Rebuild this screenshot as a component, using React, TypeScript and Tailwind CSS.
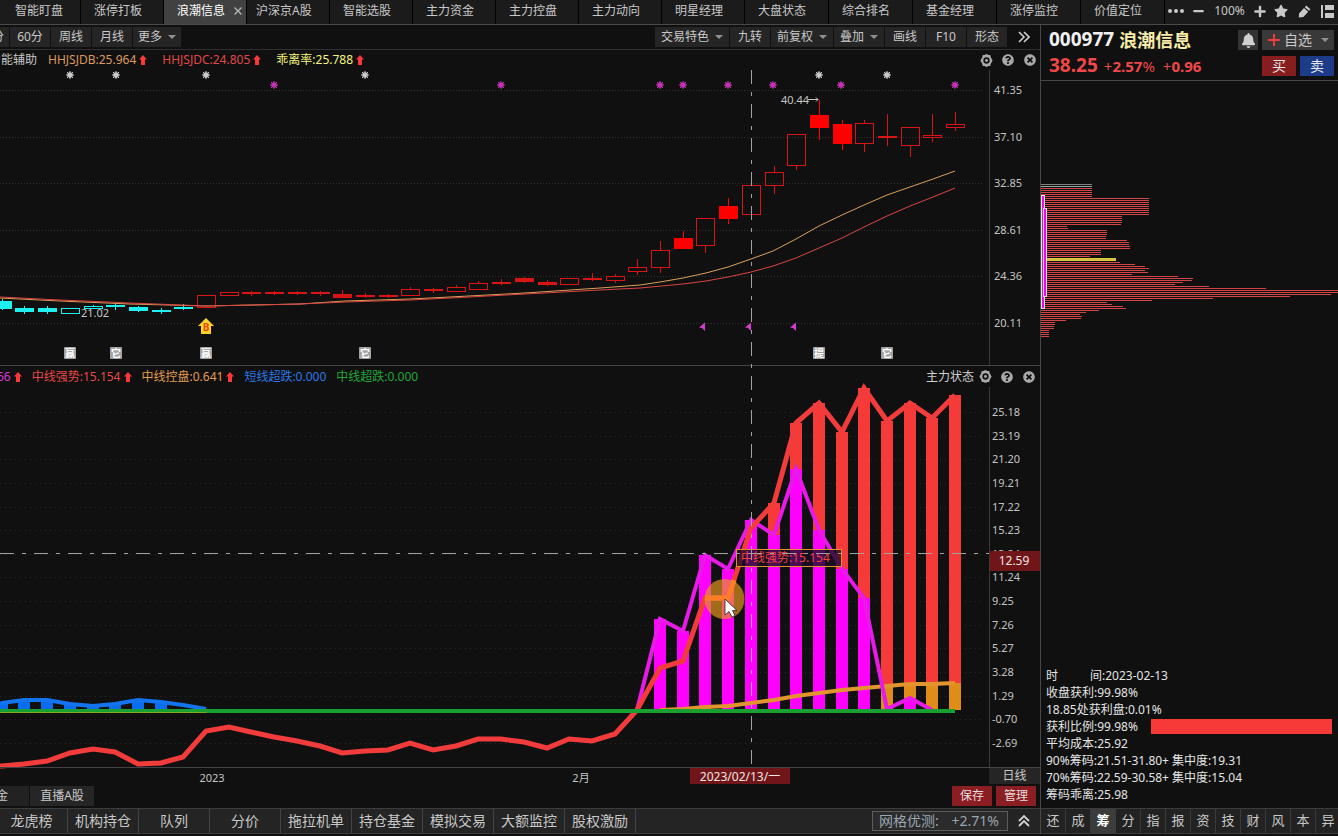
import { FaBell, FaPen, FaPlus, FaMinus, FaQuestionCircle, FaStar, FaTimesCircle } from 'react-icons/fa'

const TABS = [
  '智能盯盘', '涨停打板', '浪潮信息', '沪深京A股', '智能选股', '主力资金', '主力控盘',
  '主力动向', '明星经理', '大盘状态', '综合排名', '基金经理', '涨停监控', '价值定位',
]
const ACTIVE_TAB = '浪潮信息'

const FOOTER_TABS = ['龙虎榜', '机构持仓', '队列', '分价', '拖拉机单', '持仓基金', '模拟交易', '大额监控', '股权激励']
const SIDE_TABS = ['还', '成', '筹', '分', '指', '报', '资', '技', '财', '风', '本', '异']

const CHIP_INFO = [
  '收盘获利:99.98%',
  '18.85处获利盘:0.01%',
  '获利比例:99.98%',
  '平均成本:25.92',
  '90%筹码:21.51-31.80+ 集中度:19.31',
  '70%筹码:22.59-30.58+ 集中度:15.04',
  '筹码乖离:25.98',
]

// x centre of the k-th trading day, 0 is the first session of 2023
const dayX = (k: number) => Math.round(206 + 22.7 * k)

interface Candle {
  k: number
  top: number
  bottom: number
  high: number
  low: number
  filled?: boolean
  down?: boolean
}

const c = (k: number, top: number, bottom: number, high: number, low: number, filled = false, down = false): Candle =>
  ({ k, top, bottom, high, low, filled, down })

const CANDLES: Candle[] = [
  c(-9, 301, 309, 299, 310, true, true),
  c(-8, 308, 312, 306, 314, true, true),
  c(-7, 308, 312, 306, 314, true, true),
  c(-6, 308, 313, 308, 313, false, true),
  c(-5, 306, 308, 305, 308, false, true),
  c(-4, 305, 307, 303, 310, true, true),
  c(-3, 307, 311, 306, 312, true, true),
  c(-2, 310, 312, 308, 314, true, true),
  c(-1, 307, 309, 304, 310, true, true),
  c(0, 295, 307, 295, 307),
  c(1, 292, 295, 292, 295),
  c(2, 292, 294, 291, 296, true),
  c(3, 292, 294, 291, 295, true),
  c(4, 292, 294, 291, 295, true),
  c(5, 292, 294, 291, 296, true),
  c(6, 294, 298, 290, 298, true),
  c(7, 295, 297, 293, 298, true),
  c(8, 295, 297, 294, 298, true),
  c(9, 289, 295, 287, 295),
  c(10, 289, 291, 288, 293, true),
  c(11, 287, 291, 285, 292),
  c(12, 283, 289, 281, 290),
  c(13, 282, 284, 279, 285, true),
  c(14, 278, 282, 277, 283, true),
  c(15, 282, 285, 280, 286, true),
  c(16, 278, 284, 278, 284),
  c(17, 278, 280, 273, 281, true),
  c(18, 276, 280, 274, 283),
  c(19, 267, 271, 259, 275),
  c(20, 250, 267, 241, 273),
  c(21, 238, 249, 231, 249, true),
  c(22, 218, 245, 218, 253),
  c(23, 206, 219, 198, 224, true),
  c(24, 185, 214, 185, 214),
  c(25, 172, 185, 166, 194),
  c(26, 134, 165, 134, 170),
  c(27, 115, 128, 100, 140, true),
  c(28, 124, 144, 120, 150, true),
  c(29, 123, 143, 120, 152),
  c(30, 136, 138, 114, 146, true),
  c(31, 127, 145, 127, 157),
  c(32, 135, 137, 114, 142),
  c(33, 124, 127, 112, 131),
]

const FAST_LINE =
  '0,298 60,301 130,304 206,306 300,304 345,301 410,299 450,297 525,293 600,288 640,285 660,282 683,278 706,273 728,267 751,259 773,251 796,239 819,226 842,215 864,205 887,195 910,187 933,179 955,171'
const SLOW_LINE =
  '0,297 60,300 130,303 206,306 300,304 345,302 410,300 450,298 525,294 600,290 640,288 683,284 706,281 728,277 751,272 773,266 796,258 819,248 842,238 864,227 887,216 910,206 933,197 955,188'

const PRICE_TICKS = ['41.35', '37.10', '32.85', '28.61', '24.36', '20.11']
const FLOW_TICKS = [
  '25.18', '23.19', '21.20', '19.21', '17.22', '15.23', '13.24', '11.24',
  '9.25', '7.26', '5.27', '3.28', '1.29', '-0.70', '-2.69',
]

const TREND = [
  766, 764, 761, 753, 749, 752, 764, 763, 757, 731, 727, 732, 737, 741, 746, 753, 751, 750, 743, 750, 746,
  739, 739, 742, 748, 739, 741, 734, 710, 668, 661, 598, 598, 528, 503, 423, 403, 432, 388, 421, 403, 418, 395,
]
const FLOW = [710, 619, 631, 555, 569, 520, 535, 469, 530, 569, 598, 709, 698, 710]
const CONTROL = [710, 709, 707, 706, 703, 700, 696, 693, 690, 688, 686, 684, 684, 683]
const OVERSOLD = [703, 700, 700, 704, 706, 704, 700, 702, 705, 709]

const line = (ys: number[], start: number) => ys.map((y, i) => `${dayX(start + i)},${y}`).join(' ')

// widths of the chip distribution rows, two pixels apart
const CHIPS = [
  51, 51, 51, 51, 51, 51, 51, 108, 108, 108, 108, 108, 108, 108, 108, 108, 81, 81, 81, 81, 80, 26, 27,
  66, 66, 66, 65, 65, 86, 88, 88, 89, 89, 60, 60, 60, 49, 0, 0, 79, 94, 104, 108, 104, 107, 91, 137, 152,
  151, 142, 134, 168, 225, 297, 297, 290, 249, 172, 111, 66, 71, 82, 85, 58, 45, 39, 41, 40, 25, 14, 14,
  13, 13, 8, 8, 8, 8,
]

function GearIcon() {
  return (
    <svg viewBox="0 0 14 14" className="size-[13px]">
      <path
        d="M3 1.2H5.2L6 .4H8L8.8 1.2H11L11.6 3.6L13.6 7L11.6 10.4L11 12.8H8.8L8 13.6H6L5.2 12.8H3L2.4 10.4L.4 7L2.4 3.6Z M7 3.6A3.4 3.4 0 1 0 7 10.4A3.4 3.4 0 1 0 7 3.6Z"
        fill="currentColor"
        fillRule="evenodd"
      />
      <circle cx="7" cy="7" r="1.6" fill="currentColor" />
    </svg>
  )
}

function PaneTools({ title }: { title?: string }) {
  return (
    <div className="ml-auto flex shrink-0 items-center text-[#a8a8a8]">
      {title && <span className="mr-[5px] text-[#d0d0d0]">{title}</span>}
      <button aria-label="设置" className="mr-[9px]"><GearIcon /></button>
      <button aria-label="帮助" className="mr-[10px]"><FaQuestionCircle className="size-3" /></button>
      <button aria-label="关闭"><FaTimesCircle className="size-3" /></button>
    </div>
  )
}

function Indicator({ text, color, up = true }: { text: string; color: string; up?: boolean }) {
  return (
    <span className={`flex shrink-0 items-center gap-[3px] ${color}`}>
      {text}
      {up && (
        <svg viewBox="0 0 8 10" className="h-[10px] w-2">
          <path d="M4 0 L8 4.5 H6 V10 H2 V4.5 H0 Z" fill="#fb3838" />
        </svg>
      )}
    </span>
  )
}

function Caret() {
  return <span className="h-0 w-0 border-x-4 border-t-4 border-x-transparent border-t-[#909090]" />
}

function Burst({ x, y, color }: { x: number; y: number; color: string }) {
  return (
    <g stroke={color} strokeWidth="1">
      <circle cx={x} cy={y} r="2.8" fill={color} stroke="none" />
      <path d={`M${x - 4} ${y}h8M${x} ${y - 4}v8M${x - 3} ${y - 3}l6 6M${x + 3} ${y - 3}l-6 6`} />
    </g>
  )
}

function EventTag({ x, label }: { x: number; label: string }) {
  return (
    <g>
      <rect x={x - 6} y="347" width="12" height="12" rx="1" fill="#a2a2a2" />
      <text x={x} y="357" fontSize="10" fontWeight="700" textAnchor="middle" fill="#fff">{label}</text>
    </g>
  )
}

function PriceChart() {
  return (
    <svg viewBox="0 68 1040 297" preserveAspectRatio="xMaxYMid meet" className="block h-[297px] w-full">
      {PRICE_TICKS.map((tick, i) => {
        const y = Math.round(90 + i * 46.6)
        return (
          <g key={tick}>
            <path d={`M0 ${y + 0.5}H984`} stroke="#323232" strokeDasharray="1 2" />
            <text x="994" y={y + 4} fontSize="11" fill="#c4c4c4">{tick}</text>
          </g>
        )
      })}
      <path d="M989.5 70V365" stroke="#3a3a3a" />

      {CANDLES.map((d) => {
        const x = dayX(d.k)
        const color = d.down ? '#1ef0f0' : d.filled && d.bottom - d.top > 8 ? '#ff0000' : '#d81414'
        return (
          <g key={d.k} stroke={color} shapeRendering="crispEdges">
            <path d={`M${x + 0.5} ${d.high}V${d.top}M${x + 0.5} ${d.bottom}V${d.low}`} />
            {d.filled ? (
              <rect x={x - 9} y={d.top} width="19" height={d.bottom - d.top} fill={color} stroke="none" />
            ) : (
              <rect x={x - 9 + 0.5} y={d.top + 0.5} width="18" height={d.bottom - d.top} fill="none" />
            )}
          </g>
        )
      })}
      <polyline points={FAST_LINE} fill="none" stroke="#d8a05a" />
      <polyline points={SLOW_LINE} fill="none" stroke="#dc4444" />

      {[70, 116, 206, 365, 819, 887].map((x) => <Burst key={x} x={x} y={75} color="#c8c8c8" />)}
      {[274, 501, 660, 683, 728, 773, 841, 955].map((x) => <Burst key={x} x={x} y={85} color="#c232b4" />)}

      <text x="781" y="104" fontSize="11" fill="#c4c4c4">40.44</text>
      <path d="M808 99.5H818M816 97.5l2 2l-2 2" fill="none" stroke="#c4c4c4" />
      <text x="81" y="317" fontSize="11" fill="#c4c4c4">21.02</text>

      <path d="M206 318l8 8h-3v8h-10v-8h-3Z" fill="#ffd32a" />
      <text x="206" y="331" fontSize="10" fontWeight="700" textAnchor="middle" fill="#f04a10">B</text>

      {[703, 749, 794].map((x) => (
        <path key={x} d={`M${x - 4} 327.5L${x + 2} 322.5V331L${x - 1} 328Z`} fill="#d63cd0" />
      ))}

      <EventTag x={70} label="赢" />
      <EventTag x={116} label="它" />
      <EventTag x={206} label="赢" />
      <EventTag x={365} label="它" />
      <EventTag x={819} label="提" />
      <EventTag x={887} label="它" />
    </svg>
  )
}

function FlowChart() {
  return (
    <svg viewBox="0 387 1040 380" preserveAspectRatio="xMaxYMid meet" className="block h-[380px] w-full overflow-visible">
      {FLOW_TICKS.map((tick, i) => {
        const y = Math.round(412 + i * 23.64)
        return (
          <g key={tick}>
            <path d={`M0 ${y + 0.5}H984`} stroke="#2a2a2a" strokeDasharray="1 4" />
            <text x="992" y={y + 4} fontSize="11" fill="#c4c4c4">{tick}</text>
          </g>
        )
      })}
      <path d="M989.5 387V767" stroke="#3a3a3a" />

      {OVERSOLD.slice(0, 8).map((y, i) => (
        <rect key={i} x={dayX(i - 9) - 6} y={y} width="12" height={710 - y} fill="#0a6cf0" />
      ))}
      <polyline points={`0,704 ${line(OVERSOLD, -9)}`} fill="none" stroke="#1474f0" strokeWidth="4" />

      {TREND.slice(34).map((y, i) => (
        <rect key={i} x={dayX(25 + i) - 6} y={y} width="12" height={710 - y} fill="#f63a38" />
      ))}
      {CONTROL.slice(10).map((y, i) => (
        <rect key={i} x={dayX(30 + i) - 6} y={y} width="12" height={710 - y} fill="#e08c18" />
      ))}
      {FLOW.slice(1, 13).map((y, i) => (
        <rect key={i} x={dayX(20 + i) - 6} y={y} width="12" height={710 - y} fill="#ff00ff" />
      ))}
      <polyline points={line(CONTROL, 20)} fill="none" stroke="#e2952e" strokeWidth="4" />
      <polyline points={line(FLOW, 19)} fill="none" stroke="#e81ae8" strokeWidth="4" />
      <polyline points={`0,766 ${line(TREND, -9)}`} fill="none" stroke="#f23c3c" strokeWidth="5" />
      <path d="M0 711H955" stroke="#18a030" strokeWidth="4" />
      <path d="M0 712.5H206" stroke="#7cae20" strokeWidth="1" />

      <circle cx="724.5" cy="599" r="20" fill="#e6961e" fillOpacity="0.68" />
      <path d="M705 598H728L734 580" fill="none" stroke="#ff7d28" strokeWidth="5" />

      <rect x="736.5" y="549.5" width="105" height="17" fill="#1a0f24" fillOpacity="0.78" stroke="#e09030" />
      <text x="741" y="562" fontSize="12" fill="#f04444">中线强势:15.154</text>

      <path d="M751.5 70V767" stroke="#a0a0a0" strokeDasharray="14 8 4 8" />
      <path d="M0 553.5H989" stroke="#a0a0a0" strokeDasharray="14 8 4 8" />

      <rect x="990" y="551" width="50" height="20" fill="#701618" />
      <text x="1014" y="565" fontSize="12" textAnchor="middle" fill="#f0e4e4">12.59</text>

      <path d="M725 599V615L729 611.5L732 617L735 615.5L732.5 610.5H737Z" fill="#fff" stroke="#222" strokeWidth="0.8" />
    </svg>
  )
}

function ChipChart() {
  return (
    <svg viewBox="0 81 297 584" preserveAspectRatio="xMinYMin meet" className="block h-[584px] w-full">
      {CHIPS.map((width, i) => (
        <rect key={i} x="0" y={184 + i * 2} width={width} height="1" fill={i === 0 ? '#808080' : i === 1 ? '#90a8a0' : '#d04646'} />
      ))}
      <rect x="0" y="258" width="75" height="3" fill="#d8c440" />
      <rect x="0.5" y="195.5" width="3" height="113" fill="#dc14dc" stroke="#f4dcf4" />
      <rect x="2.5" y="208.5" width="3" height="88" fill="#dc14dc" stroke="#f4dcf4" />
    </svg>
  )
}

function ToolButton({ label, width, caret = false }: { label: string; width: string; caret?: boolean }) {
  return (
    <button className={`flex h-5 shrink-0 items-center justify-center gap-[6px] bg-[#252525] ${width}`}>
      {label}
      {caret && <Caret />}
    </button>
  )
}

export default function App() {
  return (
    <div className="flex min-h-screen flex-col overflow-hidden bg-[#101010] font-['Noto_Sans','Noto_Sans_CJK_SC',sans-serif] text-xs whitespace-nowrap text-[#c8c8c8]">
      <header className="flex h-[25px] shrink-0 items-stretch border-b border-[#4a4a4a] bg-[#1b1b1b]">
        <nav className="flex">
          {TABS.map((tab, i) => (
            <button
              key={tab}
              className={`flex shrink-0 items-center border-r border-black pb-[2px] ${
                i === 0 ? 'ml-[2px] w-[79px]' : i < 9 ? 'w-[83px]' : 'w-[84px]'
              } ${tab === ACTIVE_TAB ? 'bg-[#414141] text-white' : ''} ${tab === '沪深京A股' ? 'pl-[9px]' : 'pl-[13px]'}`}
            >
              {tab}
              {tab === ACTIVE_TAB && (
                <svg viewBox="0 0 8 8" className="ml-[9px] size-2" stroke="#b8b8b8" strokeWidth="1.2">
                  <path d="M0.5 0.5L7.5 7.5M7.5 0.5L0.5 7.5" />
                </svg>
              )}
            </button>
          ))}
        </nav>
        <div className="ml-auto flex items-center pb-[2px] pr-1">
          <button aria-label="更多标签" className="mr-2 flex gap-[2px]">
            <span className="size-1 rounded-full bg-[#c8c8c8]" />
            <span className="size-1 rounded-full bg-[#c8c8c8]" />
            <span className="size-1 rounded-full bg-[#c8c8c8]" />
          </button>
          <button aria-label="缩小"><FaMinus className="h-3 w-[13px]" /></button>
          <span className="w-[49px] text-center">100%</span>
          <button aria-label="放大"><FaPlus className="h-[13px] w-3" /></button>
          <button aria-label="收藏" className="ml-2"><FaStar className="size-[14px]" /></button>
          <button aria-label="画笔" className="ml-[10px]">
            <svg viewBox="0 0 13 13" className="size-[13px]" fill="currentColor">
              <path d="M8.2 0.6L12.4 4.2L11 5.8L6.8 2.2ZM6 3.1L10.2 6.7L5.4 12L0.8 12.6L1 8.6Z" />
            </svg>
          </button>
          <button aria-label="布局" className="ml-[10px]">
            <svg viewBox="0 0 13 13" className="size-[13px]" fill="currentColor">
              <path d="M0 0H2V13H0ZM4 0H13V5H4ZM4 8H13V13H4Z" />
            </svg>
          </button>
        </div>
      </header>

      <div className="flex">
        <main className="flex min-w-0 flex-1 flex-col">
          <div className="flex h-[25px] shrink-0 items-center border-b border-[#303030]">
            <div className="flex gap-px">
              <div className="w-[9px] overflow-hidden bg-[#252525]">
                <button className="-ml-2 flex h-5 items-center">分</button>
              </div>
              <ToolButton label="60分" width="w-10" />
              <ToolButton label="周线" width="w-10" />
              <ToolButton label="月线" width="w-10" />
              <ToolButton label="更多" width="w-12" caret />
            </div>
            <div className="ml-auto flex items-center gap-px">
              <ToolButton label="交易特色" width="w-[74px]" caret />
              <ToolButton label="九转" width="w-10" />
              <ToolButton label="前复权" width="w-[62px]" caret />
              <ToolButton label="叠加" width="w-[50px]" caret />
              <ToolButton label="画线" width="w-10" />
              <ToolButton label="F10" width="w-10" />
              <ToolButton label="形态" width="w-10" />
              <button aria-label="展开" className="flex w-8 justify-center">
                <svg viewBox="0 0 12 12" className="size-3" fill="none" stroke="#d0d0d0" strokeWidth="1.6">
                  <path d="M1 1L6 6L1 11M6 1L11 6L6 11" />
                </svg>
              </button>
            </div>
          </div>

          <div className="flex h-[18px] items-center overflow-hidden pt-[2px] pr-1">
            <span className="-ml-[11px] mr-[11px]">智能辅助</span>
            <div className="flex gap-[15px]">
              <Indicator text="HHJSJDB:25.964" color="text-[#dc9a5c]" />
              <Indicator text="HHJSJDC:24.805" color="text-[#e04848]" />
              <Indicator text="乖离率:25.788" color="text-[#f4f480]" />
            </div>
            <PaneTools />
          </div>
          <PriceChart />
          <div className="flex h-[22px] items-center border-t border-[#444] pr-[5px]">
            <div className="-ml-[3px] flex gap-[10px]">
              <Indicator text="66" color="text-[#d838d8]" />
              <Indicator text="中线强势:15.154" color="text-[#e44848]" />
              <Indicator text="中线控盘:0.641" color="text-[#e09c50]" />
              <Indicator text="短线超跌:0.000" color="text-[#2a78e8]" up={false} />
              <Indicator text="中线超跌:0.000" color="text-[#22a83a]" up={false} />
            </div>
            <PaneTools title="主力状态" />
          </div>
          <FlowChart />

          <div className="flex h-[18px] border-t border-[#444]">
            <svg viewBox="0 768 989 17" preserveAspectRatio="xMaxYMid meet" className="block h-[17px] min-w-0 flex-1 overflow-visible">
              <text x="212" y="782" fontSize="11" textAnchor="middle" fill="#c4c4c4">2023</text>
              <text x="581" y="782" fontSize="11" textAnchor="middle" fill="#c4c4c4">2月</text>
              <rect x="690" y="768" width="100" height="16" fill="#701618" />
              <text x="740" y="781" fontSize="12" textAnchor="middle" fill="#f0e4e4">2023/02/13/一</text>
            </svg>
            <button className="h-4 w-[51px] shrink-0 bg-[#252525]">日线</button>
          </div>

          <div className="flex h-[23px] pt-px pr-1">
            <div className="flex h-5 gap-px">
              <button className="w-[29px] bg-[#222] pr-[21px] text-left"><span className="-ml-1">金</span></button>
              <button className="w-16 bg-[#262626]">直播A股</button>
            </div>
            <div className="ml-auto flex h-5 gap-1 text-[#e8dcdc]">
              <button className="w-10 bg-[#8a1e22]">保存</button>
              <button className="w-10 bg-[#8a1e22]">管理</button>
            </div>
          </div>

          <footer className="flex h-[26px] items-center border-y border-[#3c3c3c] bg-[#242424] text-sm">
            {FOOTER_TABS.map((tab, i) => (
              <button
                key={tab}
                className={`h-full shrink-0 border-r border-[#444] ${i === 0 ? 'w-[68px] pr-1' : 'w-[71px]'}`}
              >
                {tab}
              </button>
            ))}
            <button className="ml-auto flex h-5 w-[136px] items-center border border-[#5c5c5c] bg-[#2b2b2b] pl-[6px] text-[#9aa6b0]">
              网格优测:
              <span className="ml-auto pr-2">+2.71%</span>
            </button>
            <button aria-label="收起" className="flex w-8 justify-center">
              <svg viewBox="0 0 12 12" className="size-3" fill="none" stroke="#d0d0d0" strokeWidth="1.8">
                <path d="M1 6L6 1L11 6M1 11L6 6L11 11" />
              </svg>
            </button>
          </footer>
        </main>

        <aside className="flex w-[298px] shrink-0 flex-col border-l border-[#484848]">
          <div className="flex h-14 shrink-0 flex-col gap-[6px] border-b border-[#484848] pt-[5px] pr-1 pl-2 font-bold">
            <div className="flex h-5 items-center">
              <span className="text-[19px] text-[#f0f0f0]">000977</span>
              <h1 className="ml-[5px] text-lg text-[#f8eca8]">浪潮信息</h1>
              <button aria-label="提醒" className="ml-auto flex size-5 items-center justify-center bg-[#333] text-[#d0d0d0]">
                <FaBell className="size-[15px]" />
              </button>
              <button className="ml-1 flex h-5 w-[72px] items-center bg-[#393939] pl-[6px] text-sm font-normal">
                <svg viewBox="0 0 12 12" className="size-3" stroke="#f03c3c" strokeWidth="2">
                  <path d="M6 0V12M0 6H12" />
                </svg>
                <span className="ml-1 mr-[9px]">自选</span>
                <Caret />
              </button>
            </div>
            <div className="flex h-5 items-center text-[15px] text-[#f04848]">
              <span className="text-[19px]">38.25</span>
              <span className="ml-[6px]"><span className="font-normal">+</span>2.57<span className="font-normal">%</span></span>
              <span className="ml-2"><span className="font-normal">+</span>0.96</span>
              <button className="ml-auto h-5 w-[34px] bg-[#861e20] text-sm font-normal text-[#e8e8e8]">买</button>
              <button className="ml-1 h-5 w-[34px] bg-[#1c3c8a] text-sm font-normal text-[#e8e8e8]">卖</button>
            </div>
          </div>

          <ChipChart />

          <div className="flex flex-1 flex-col pt-[2px] pl-[5px] leading-[17px] text-[#e4e4e4]">
            <div className="flex"><span className="w-11">时</span>间:2023-02-13</div>
            {CHIP_INFO.map((text) => (
              <div key={text} className="flex items-center">
                {text}
                {text.startsWith('获利比例') && <span className="mr-[6px] ml-auto h-[15px] w-[181px] bg-[#f63a38]" />}
              </div>
            ))}
          </div>

          <nav className="flex h-[26px] shrink-0 overflow-hidden border-y border-[#3c3c3c] bg-[#222] text-[13px]">
            {SIDE_TABS.map((tab) => (
              <button
                key={tab}
                className={`w-[25px] shrink-0 border-r border-[#3a3a3a] ${tab === '筹' ? 'bg-[#3c3c3c] font-bold text-white' : ''}`}
              >
                {tab}
              </button>
            ))}
          </nav>
        </aside>
      </div>
    </div>
  )
}
